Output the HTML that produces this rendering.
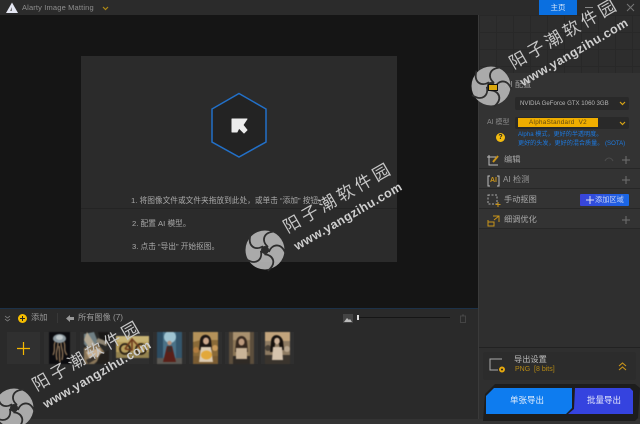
<!DOCTYPE html>
<html lang="zh"><head><meta charset="utf-8"><style>
html,body{margin:0;padding:0;background:#2a2a2a}
#r{position:relative;width:640px;height:424px;overflow:hidden;background:#151515;font-family:"Liberation Sans","Noto Sans CJK SC",sans-serif;color:#bbb}
.a{position:absolute;white-space:nowrap}
.t{font-size:8.2px;line-height:10px}
.th{position:absolute;top:332px;filter:blur(.5px)}
.wm{position:absolute;width:0;height:0}
.wm svg{position:absolute;left:-22px;top:-22px;opacity:.93}
.w1,.w2{position:absolute;white-space:nowrap;transform-origin:0 50%;transform:rotate(-30deg);color:#c6c6c6;line-height:20px}
.w1{font-size:17px;letter-spacing:3.600px;left:20px;top:-31px}
.w2{font-size:12.500px;font-weight:bold;letter-spacing:.45px;left:30px;top:-13px;color:#cfcfcf}
.row{position:absolute;left:479px;width:161px;height:19px;background:#333;border-bottom:1px solid #272727}
</style></head><body><div id="r">
<!-- title bar -->
<div class="a" style="left:0;top:0;width:640px;height:15px;background:#2b2b2b"></div>
<svg class="a" style="left:5px;top:2px" width="14" height="12" viewBox="0 0 14 12"><path d="M7 .5L13 11H1z" fill="#e4e6f2"/><path d="M7 5L5 9h2z" fill="#777"/></svg>
<div class="a" style="left:22px;top:3px;font-size:7.500px;line-height:10px;color:#8e8e8e;letter-spacing:.15px">Alarty Image Matting</div>
<svg class="a" style="left:102px;top:6px" width="7" height="5"><path d="M1 1l2.500 2.500L6 1" fill="none" stroke="#b08a14" stroke-width="1.200"/></svg>
<div class="a" style="left:539px;top:0;width:38px;height:15px;background:#0a6fe0;color:#dbe9fa;font-size:7.500px;line-height:15px;text-align:center">主页</div>
<div class="a" style="left:585px;top:7px;width:8px;height:1px;background:#888"></div>
<svg class="a" style="left:626px;top:3px" width="9" height="9"><path d="M1 1l7 7M8 1L1 8" stroke="#777"/></svg>

<!-- center card -->
<div class="a" style="left:81px;top:56px;width:316px;height:206px;background:#2b2b2b"></div>
<div class="a" style="left:81px;top:208px;width:316px;height:1px;background:#242424"></div>
<svg class="a" style="left:205px;top:88px" width="68" height="74" viewBox="0 0 68 74"><path d="M34 5.500L61 21V54L34 69L7 54V21Z" fill="#232323" stroke="#2270c8" stroke-width="1.500"/><path d="M27 31H42L38 37L42 42L39 45L34 40L32 44H27Z" fill="#ececec" stroke="#ececec" stroke-linejoin="round"/></svg>
<div class="a t" style="left:131px;top:196px;color:#aaa;font-size:7.700px">1. 将图像文件或文件夹拖放到此处，或单击 “添加” 按钮。</div>
<div class="a t" style="left:132px;top:219px;color:#aaa;font-size:7.700px">2. 配置 AI 模型。</div>
<div class="a t" style="left:132px;top:242px;color:#aaa;font-size:7.700px">3. 点击 “导出” 开始抠图。</div>

<!-- bottom panel -->
<div class="a" style="left:0;top:308px;width:478px;height:1px;background:#1c3148"></div>
<div class="a" style="left:0;top:309px;width:478px;height:110px;background:#2a2a2a"></div>
<div class="a" style="left:0;top:419px;width:640px;height:5px;background:#333"></div>
<svg class="a" style="left:4px;top:315px" width="7" height="7"><path d="M1 1l2.500 2 2.500-2M1 4l2.500 2 2.500-2" fill="none" stroke="#888" stroke-width=".8"/></svg>
<div class="a" style="left:18px;top:314px;width:9px;height:9px;border-radius:50%;background:#f5bd00"></div>
<div class="a" style="left:20px;top:318px;width:5px;height:1px;background:#222"></div>
<div class="a" style="left:22px;top:316px;width:1px;height:5px;background:#222"></div>
<div class="a t" style="left:31px;top:313px;color:#999">添加</div>
<div class="a" style="left:57px;top:313px;width:1px;height:10px;background:#383838"></div>
<svg class="a" style="left:66px;top:315px" width="8" height="7"><path d="M0 3.500L4 0V2H8V5H4V7Z" fill="#999"/></svg>
<div class="a t" style="left:78px;top:313px;color:#999">所有图像 (7)</div>
<svg class="a" style="left:343px;top:314px" width="10" height="9"><rect width="10" height="9" fill="#444"/><path d="M1 8L4 4l2 2 1-1 2 3z" fill="#bbb"/></svg>
<div class="a" style="left:357px;top:315px;width:2px;height:5px;background:#ddd"></div>
<div class="a" style="left:359px;top:317px;width:91px;height:1px;background:#161616"></div>
<svg class="a" style="left:459px;top:314px" width="8" height="9"><path d="M1 2H7M3 1H5M1.500 2V8.500H6.500V2" fill="none" stroke="#444"/></svg>

<div class="a" style="left:7px;top:332px;width:33px;height:32px;background:#303030"></div>
<svg class="a" style="left:17px;top:342px" width="13" height="13"><path d="M6.500 0V13M0 6.500H13" stroke="#f5b800" stroke-width="1.200"/></svg>
<div class="a" style="left:44px;top:332px;width:32px;height:32px;background:#2f2f2f"></div>
<div class="a" style="left:80px;top:332px;width:32px;height:32px;background:#2f2f2f"></div>
<div class="a" style="left:116px;top:332px;width:33px;height:32px;background:#2f2f2f"></div>
<div class="a" style="left:153px;top:332px;width:33px;height:32px;background:#2f2f2f"></div>
<div class="a" style="left:189px;top:332px;width:33px;height:32px;background:#2f2f2f"></div>
<div class="a" style="left:225px;top:332px;width:33px;height:32px;background:#2f2f2f"></div>
<div class="a" style="left:261px;top:332px;width:33px;height:32px;background:#2f2f2f"></div>

<svg class="th" style="left:49px" width="21" height="32" viewBox="0 0 21 32"><rect width="21" height="32" fill="#0c0c0f"/><ellipse cx="10.500" cy="6.500" rx="6.500" ry="4.500" fill="#8d9aa0"/><ellipse cx="10.500" cy="5.500" rx="3.500" ry="2.500" fill="#c2cacc"/><path d="M6 10C4 15 7 17 4 23M9 11C9 17 6 20 8 28M12 11C12 17 15 19 13 28M15 10C17 15 14 18 18 23M10 14C11 20 10 24 11 30" fill="none" stroke="#8f7558" stroke-width="1.300"/></svg>
<svg class="th" style="left:84px" width="25" height="32" viewBox="0 0 25 32"><rect width="25" height="32" fill="#2a2a28"/><path d="M0 2L10 0L14 10L6 18L0 12Z" fill="#6f7f84"/><path d="M3 0L12 14L8 20L0 8Z" fill="#b3a893"/><path d="M14 0H25V12L18 14Z" fill="#191817"/><path d="M0 16L14 12L22 22L10 32H0Z" fill="#8a7658"/><path d="M2 20L16 16L18 22L6 28Z" fill="#cab293"/><path d="M16 22L25 18V32H12Z" fill="#23201c"/><path d="M14 6L24 10L22 14L12 10Z" fill="#8d8472"/><path d="M2 28L10 24L12 27L4 32Z" fill="#39332c"/></svg>
<svg class="th" style="left:116px;top:336px" width="33" height="22" viewBox="0 0 33 22"><rect width="33" height="22" fill="#b89f5c"/><rect y="0" width="33" height="6" fill="#c8b474"/><rect y="16" width="33" height="6" fill="#93824f"/><circle cx="9" cy="13" r="5" fill="none" stroke="#2b2115" stroke-width="1.800"/><circle cx="25" cy="13" r="5" fill="none" stroke="#2b2115" stroke-width="1.800"/><path d="M9 13L16 3L25 13M16 3V14L9 13" fill="none" stroke="#6e3b1c" stroke-width="1.600"/></svg>
<svg class="th" style="left:157px" width="25" height="32" viewBox="0 0 25 32"><rect width="25" height="32" fill="#4a7288"/><rect width="6" height="32" fill="#2c4c62"/><rect x="19" width="6" height="32" fill="#34566c"/><ellipse cx="13" cy="5" rx="6" ry="6" fill="#9fc4d2"/><rect y="26" width="25" height="6" fill="#5c5a55"/><circle cx="12.500" cy="11" r="2.200" fill="#b98f7a"/><path d="M10 14H15L19 30H6Z" fill="#5a1f18"/><path d="M11 14H14L15 20H10Z" fill="#3a2a28"/></svg>
<svg class="th" style="left:193px" width="25" height="32" viewBox="0 0 25 32"><rect width="25" height="32" fill="#8a6a38"/><path d="M0 0H25V8L18 8H8L0 10Z" fill="#b4925a"/><rect y="24" width="25" height="8" fill="#7a5c32"/><circle cx="3" cy="18" r="3" fill="#b07c40"/><circle cx="22" cy="16" r="3" fill="#c89a5a"/><path d="M7 8C8 1 17 1 18 8L19 18H6Z" fill="#1c1512"/><ellipse cx="13" cy="9" rx="3" ry="3.500" fill="#cda88c"/><path d="M8 15H18L20 30H6Z" fill="#dccbb2"/><ellipse cx="13.500" cy="23" rx="5.500" ry="4.500" fill="#e2a83a"/></svg>
<svg class="th" style="left:229px" width="25" height="32" viewBox="0 0 25 32"><rect width="25" height="32" fill="#8c7656"/><rect width="25" height="8" fill="#a8906e"/><rect y="24" width="25" height="8" fill="#2f2a25"/><rect x="0" width="4" height="32" fill="#5c4e3c"/><rect x="21" width="4" height="32" fill="#5c4e3c"/><path d="M7 10C8 2 17 2 18 10L19 20H6Z" fill="#36281e"/><ellipse cx="12.500" cy="10" rx="3" ry="3.500" fill="#bc9a7e"/><path d="M7 16H18L18 27H7Z" fill="#c9b498"/></svg>
<svg class="th" style="left:265px" width="25" height="32" viewBox="0 0 25 32"><rect width="25" height="32" fill="#8e7b62"/><rect width="25" height="9" fill="#c2a47c"/><rect y="23" width="25" height="9" fill="#3a342d"/><circle cx="3" cy="16" r="3" fill="#4a4238"/><circle cx="22" cy="17" r="3" fill="#b8a68e"/><path d="M6 10C6 1 16 1 18 9L19 18H15L14 12H10L9 20H5Z" fill="#16110d"/><ellipse cx="12" cy="9" rx="2.800" ry="3.300" fill="#cfb49a"/><path d="M8 15H17L18 28H7Z" fill="#d5c3ad"/></svg>

<!-- right panel -->
<div class="a" style="left:478px;top:15px;width:162px;height:404px;background:#2f2f2f"></div>
<div class="a" style="left:478px;top:15px;width:1px;height:404px;background:#3a3a3a"></div>
<div class="a" style="left:479px;top:15px;width:161px;height:58px;background-color:#2d2d2d;background-image:linear-gradient(#282828 1px,transparent 1px),linear-gradient(90deg,#282828 1px,transparent 1px);background-size:17px 17px"></div>
<div class="a" style="left:479px;top:73px;width:161px;height:76px;background:#333;border-bottom:1px solid #272727"></div>
<div class="a t" style="left:505px;top:80px;color:#999">AI 配置</div>
<div class="a" style="left:515px;top:97px;width:114px;height:13px;background:#292929;border-radius:2px"></div>
<div class="a t" style="left:520px;top:99px;color:#b5b5b5;font-size:6.100px">NVIDIA GeForce GTX 1060 3GB</div>
<svg class="a" style="left:619px;top:101px" width="7" height="5"><path d="M1 1l2.500 2.500L6 1" fill="none" stroke="#d9a516" stroke-width="1.200"/></svg>
<div class="a t" style="left:487px;top:118px;color:#888;font-size:7px">AI 模型</div>
<div class="a" style="left:515px;top:117px;width:114px;height:12px;background:#292929;border-radius:2px"></div>
<div class="a" style="left:518px;top:118px;width:80px;height:9px;background:#f0ae00"></div>
<div class="a t" style="left:529px;top:118px;color:#5f4710;font-size:6.300px;line-height:9px;letter-spacing:.3px">AlphaStandard&nbsp; V2</div>
<svg class="a" style="left:619px;top:121px" width="7" height="5"><path d="M1 1l2.500 2.500L6 1" fill="none" stroke="#d9a516" stroke-width="1.200"/></svg>
<div class="a" style="left:496px;top:133px;width:9px;height:9px;border-radius:50%;background:#f2bb10;color:#222;font-size:7px;line-height:9px;text-align:center;font-weight:bold">?</div>
<div class="a" style="left:518px;top:130px;color:#1d7ae0;font-size:6.100px;line-height:9px">Alpha 模式，更好的半透明度。<br>更好的头发，更好的混合质量。 (SOTA)</div>

<div class="row" style="top:149px"></div>
<div class="row" style="top:169px"></div>
<div class="row" style="top:189px"></div>
<div class="row" style="top:209px"></div>
<svg class="a" style="left:486px;top:154px" width="14" height="13" fill="none"><path d="M1 3H10M3 1V11H12" stroke="#bbb"/><path d="M7 8L12 2" stroke="#c9941a" stroke-width="2"/></svg>
<div class="a t" style="left:504px;top:155px;color:#aaa">编辑</div>
<svg class="a" style="left:604px;top:156px" width="10" height="7" fill="none"><path d="M1 5C3 1 7 1 9 5" stroke="#4c4c4c"/></svg>
<svg class="a" style="left:622px;top:156px" width="8" height="8"><path d="M4 0V8M0 4H8" stroke="#707070"/></svg>
<svg class="a" style="left:487px;top:175px" width="13" height="12" fill="none"><path d="M3 1H1V11H3M10 1H12V11H10" stroke="#bbb"/></svg>
<div class="a" style="left:490px;top:176px;color:#c9941a;font-size:7px;line-height:10px;font-weight:bold">AI</div>
<div class="a t" style="left:503px;top:175px;color:#999">AI 检测</div>
<svg class="a" style="left:622px;top:176px" width="8" height="8"><path d="M4 0V8M0 4H8" stroke="#707070"/></svg>
<svg class="a" style="left:487px;top:194px" width="14" height="13" fill="none"><rect x="1" y="1" width="9" height="9" stroke="#aaa" stroke-dasharray="2 1.500"/><path d="M11 8V13M8.500 10.500H13.500" stroke="#c9941a"/></svg>
<div class="a t" style="left:504px;top:195px;color:#aaa">手动抠图</div>
<div class="a" style="left:580px;top:194px;width:49px;height:12px;background:linear-gradient(90deg,#3a43d8,#1968e6);border-radius:1px;color:#c8d4f4;font-size:7.200px;line-height:12px;text-indent:15px">添加区域</div>
<svg class="a" style="left:586px;top:196px" width="8" height="8"><path d="M4 0V8M0 4H8" stroke="#dde"/></svg>
<svg class="a" style="left:487px;top:214px" width="14" height="13" fill="none"><path d="M1 6V12H7V8H1" stroke="#c9941a"/><path d="M6 2H12V8M7 6L12 2" stroke="#c9941a"/></svg>
<div class="a t" style="left:504px;top:215px;color:#aaa">细调优化</div>
<svg class="a" style="left:622px;top:216px" width="8" height="8"><path d="M4 0V8M0 4H8" stroke="#707070"/></svg>

<!-- export -->
<div class="a" style="left:479px;top:347px;width:161px;height:1px;background:#222"></div>
<div class="a" style="left:483px;top:352px;width:153px;height:28px;background:#2c2c2c;border-radius:2px"></div>
<svg class="a" style="left:489px;top:357px" width="18" height="18" fill="none"><path d="M13 2H1V13H9" stroke="#aaa"/><circle cx="13" cy="12.500" r="2.500" fill="#e6a90f" stroke="#e6a90f"/><circle cx="13" cy="12.500" r="1" fill="#222"/></svg>
<div class="a t" style="left:514px;top:355px;color:#bbb">导出设置</div>
<div class="a t" style="left:515px;top:365px;color:#b58914;font-size:7px">PNG&nbsp; [8 bits]</div>
<svg class="a" style="left:618px;top:362px" width="9" height="9" fill="none"><path d="M1 4l3.500-3L8 4M1 8l3.500-3L8 8" stroke="#c9941a" stroke-width="1.100"/></svg>
<svg class="a" style="left:483px;top:384px" width="157" height="38" viewBox="0 0 157 38"><path d="M0 37L2 10L12 0H152L157 4L155 34L152 37Z" fill="#1d1d1d"/><path d="M3 12L11 4H89V24L83 30H3Z" fill="#0e7cef"/><path d="M92 4H147L150 7V30H85L91 25Z" fill="#3543df"/></svg>
<div class="a" style="left:510px;top:394px;color:#e4eefc;font-size:8.500px;line-height:12px">单张导出</div>
<div class="a" style="left:587px;top:394px;color:#e6e8fc;font-size:8.500px;line-height:12px">批量导出</div>

<!-- watermarks -->
<div class="wm" style="left:491px;top:86px"><svg width="44" height="44" viewBox="-22 -22 44 44"><circle r="19.500" fill="#b4b4b4"/><g fill="none" stroke="#2e2e2e" stroke-width="1.800"><path d="M3-3C-4-9-2-18 10-18.500"/><path d="M3-3C-4-9-2-18 10-18.500" transform="rotate(72)"/><path d="M3-3C-4-9-2-18 10-18.500" transform="rotate(144)"/><path d="M3-3C-4-9-2-18 10-18.500" transform="rotate(216)"/><path d="M3-3C-4-9-2-18 10-18.500" transform="rotate(288)"/></g><circle r="4" fill="#2e2e2e"/></svg><div class="w1">阳子潮软件园</div><div class="w2">www.yangzihu.com</div></div>
<div class="a" style="left:488px;top:84px;width:8px;height:5px;background:#d9a70e;border:1px solid #111"></div>
<div class="wm" style="left:265px;top:250px"><svg width="44" height="44" viewBox="-22 -22 44 44"><circle r="19.500" fill="#b4b4b4"/><g fill="none" stroke="#2e2e2e" stroke-width="1.800"><path d="M3-3C-4-9-2-18 10-18.500"/><path d="M3-3C-4-9-2-18 10-18.500" transform="rotate(72)"/><path d="M3-3C-4-9-2-18 10-18.500" transform="rotate(144)"/><path d="M3-3C-4-9-2-18 10-18.500" transform="rotate(216)"/><path d="M3-3C-4-9-2-18 10-18.500" transform="rotate(288)"/></g><circle r="4" fill="#2e2e2e"/></svg><div class="w1">阳子潮软件园</div><div class="w2">www.yangzihu.com</div></div>
<div class="wm" style="left:14px;top:408px"><svg width="44" height="44" viewBox="-22 -22 44 44"><circle r="19.500" fill="#b4b4b4"/><g fill="none" stroke="#2e2e2e" stroke-width="1.800"><path d="M3-3C-4-9-2-18 10-18.500"/><path d="M3-3C-4-9-2-18 10-18.500" transform="rotate(72)"/><path d="M3-3C-4-9-2-18 10-18.500" transform="rotate(144)"/><path d="M3-3C-4-9-2-18 10-18.500" transform="rotate(216)"/><path d="M3-3C-4-9-2-18 10-18.500" transform="rotate(288)"/></g><circle r="4" fill="#2e2e2e"/></svg><div class="w1">阳子潮软件园</div><div class="w2">www.yangzihu.com</div></div>
</div></body></html>
